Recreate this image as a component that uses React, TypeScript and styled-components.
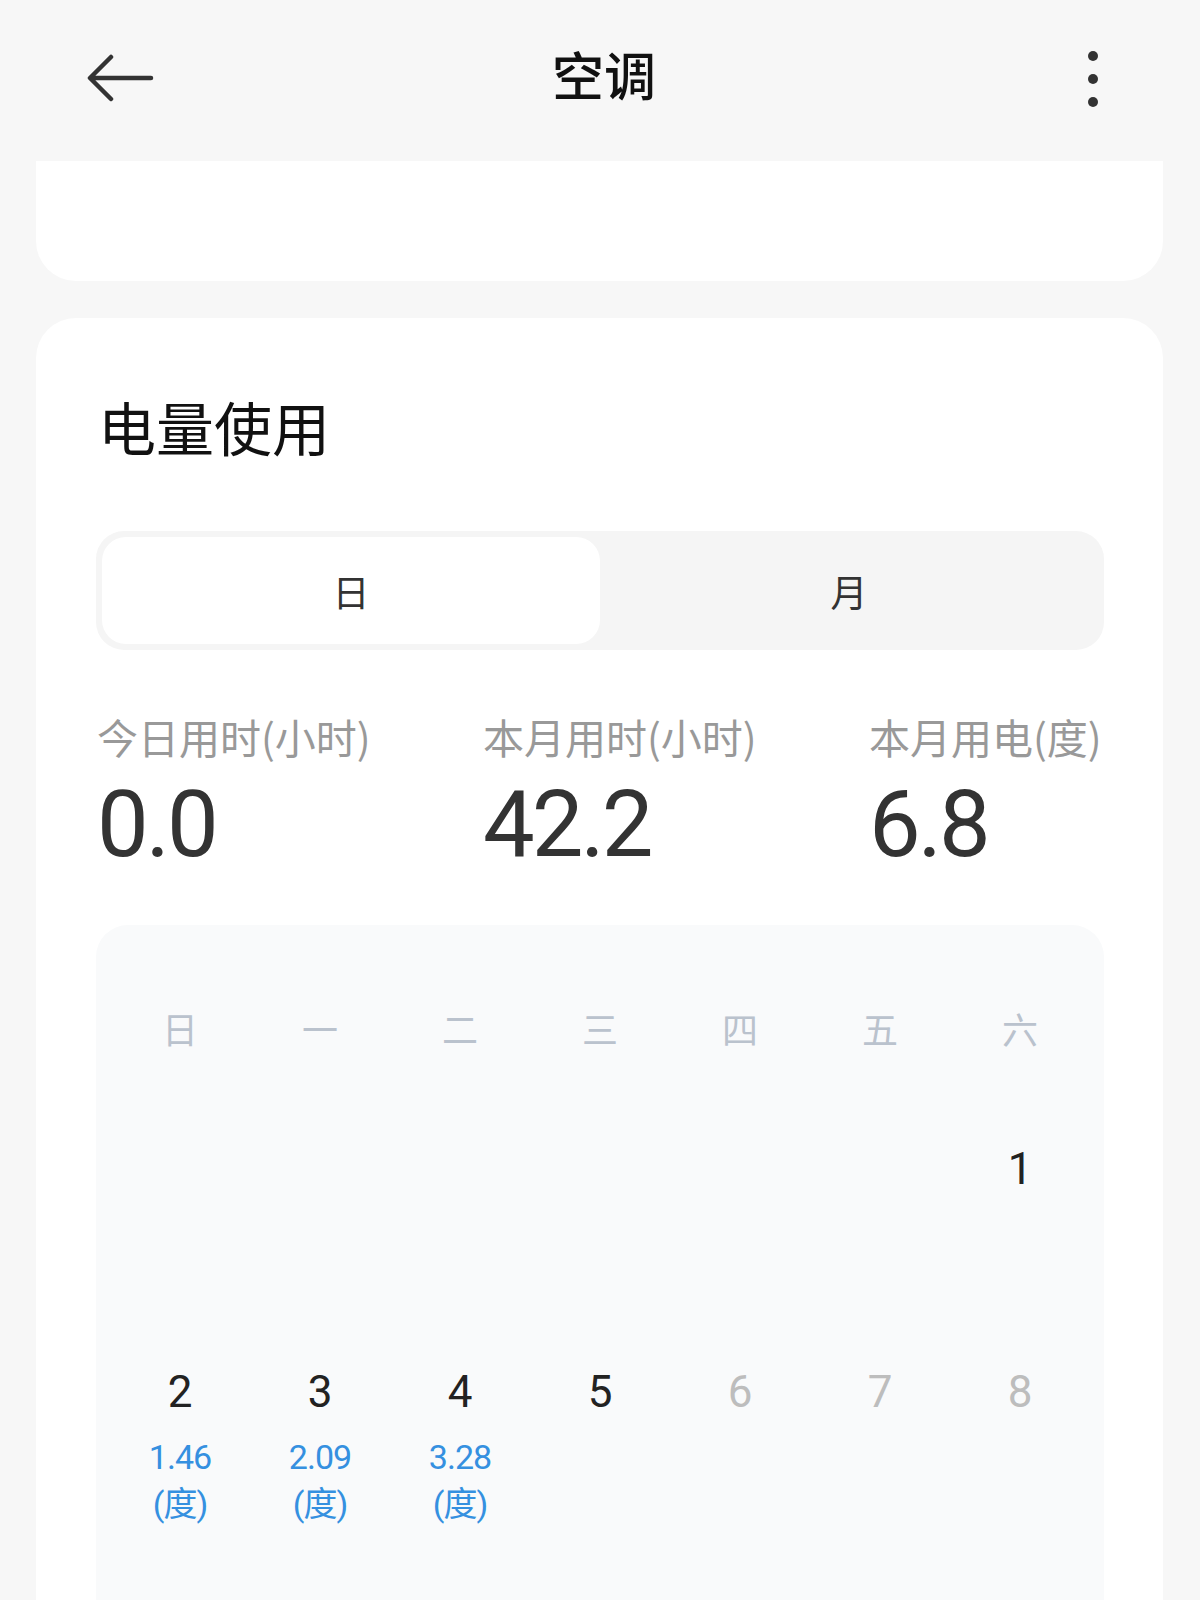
import styled, { createGlobalStyle } from 'styled-components'

const GlobalStyle = createGlobalStyle`
  html, body {
    margin: 0;
    padding: 0;
    background: #f7f7f7;
  }
  body {
    font-family: Roboto, 'Noto Sans CJK SC', sans-serif;
    color: #333;
  }
`

const weekDays = ['日', '一', '二', '三', '四', '五', '六']

type Day = { day?: number; usage?: string; future?: boolean }

const days: Day[] = [
  {}, {}, {}, {}, {}, {},
  { day: 1 },
  { day: 2, usage: '1.46' },
  { day: 3, usage: '2.09' },
  { day: 4, usage: '3.28' },
  { day: 5 },
  { day: 6, future: true },
  { day: 7, future: true },
  { day: 8, future: true },
]

const stats = [
  { label: '今日用时(小时)', value: '0.0' },
  { label: '本月用时(小时)', value: '42.2' },
  { label: '本月用电(度)', value: '6.8' },
]

export default function App() {
  return (
    <>
      <GlobalStyle />
      <Page>
        <Header>
          <IconButton aria-label="back">
            <svg width="68" height="48" viewBox="0 0 68 48" fill="none">
              <path
                d="M65 24H5M25 3L4 24L25 45"
                stroke="#333"
                strokeWidth="4.5"
                strokeLinecap="round"
                strokeLinejoin="round"
              />
            </svg>
          </IconButton>
          <Title>空调</Title>
          <MoreButton aria-label="more">
            <Dot />
            <Dot />
            <Dot />
          </MoreButton>
        </Header>

        <TopCard />

        <Card>
          <CardTitle>电量使用</CardTitle>

          <Segmented>
            <Segment active>日</Segment>
            <Segment>月</Segment>
          </Segmented>

          <StatsRow>
            {stats.map((s) => (
              <Stat key={s.label}>
                <StatLabel>{s.label}</StatLabel>
                <StatValue>{s.value}</StatValue>
              </Stat>
            ))}
          </StatsRow>

          <Calendar>
            <WeekRow>
              {weekDays.map((d) => (
                <WeekDay key={d}>{d}</WeekDay>
              ))}
            </WeekRow>
            <DayGrid>
              {days.map((d, i) => (
                <DayCell key={i}>
                  {d.day !== undefined && <DayNumber future={d.future}>{d.day}</DayNumber>}
                  {d.usage && (
                    <>
                      <Usage>{d.usage}</Usage>
                      <Usage>(度)</Usage>
                    </>
                  )}
                </DayCell>
              ))}
            </DayGrid>
          </Calendar>
        </Card>
      </Page>
    </>
  )
}

const Page = styled.div`
  width: 1200px;
  min-height: 1600px;
  background: #f7f7f7;
  overflow: hidden;
`

const Header = styled.header`
  height: 161px;
  display: flex;
  align-items: center;
  justify-content: space-between;
  padding: 0 97px 6px 86px;
  box-sizing: border-box;
  position: relative;
`

const IconButton = styled.div`
  width: 68px;
  height: 48px;
  display: flex;
  align-items: center;
`

const Title = styled.h1`
  position: absolute;
  left: 8px;
  right: 0;
  top: 42px;
  margin: 0;
  text-align: center;
  font-family: 'Noto Sans CJK SC', sans-serif;
  font-size: 52px;
  font-weight: 500;
  line-height: 64px;
  color: #111;
  pointer-events: none;
`

const MoreButton = styled.div`
  display: flex;
  flex-direction: column;
  align-items: center;
  gap: 13px;
  width: 20px;
  margin-top: 2px;
`

const Dot = styled.span`
  width: 10px;
  height: 10px;
  border-radius: 50%;
  background: #333;
`

const TopCard = styled.div`
  height: 120px;
  margin: 0 37px 0 36px;
  background: #fff;
  border-radius: 0 0 40px 40px;
`

const Card = styled.section`
  margin: 37px 37px 0 36px;
  background: #fff;
  border-radius: 40px 40px 0 0;
  padding: 71px 59px 0 60px;
  min-height: 1300px;
  box-sizing: border-box;
`

const CardTitle = styled.h2`
  margin: 0 0 0 2px;
  font-family: 'Noto Sans CJK SC', sans-serif;
  font-size: 58px;
  font-weight: 400;
  line-height: 74px;
  color: #111;
`

const Segmented = styled.div`
  margin-top: 68px;
  height: 119px;
  padding: 6px;
  box-sizing: border-box;
  background: #f5f5f5;
  border-radius: 28px;
  display: grid;
  grid-template-columns: 1fr 1fr;
`

const Segment = styled.div<{ active?: boolean }>`
  display: flex;
  align-items: center;
  justify-content: center;
  border-radius: 24px;
  background: ${(p) => (p.active ? '#fff' : 'transparent')};
  font-family: 'Noto Sans CJK SC', sans-serif;
  font-size: 37px;
  color: #333;
`

const StatsRow = styled.div`
  margin-top: 62px;
  display: grid;
  grid-template-columns: 386px 386px auto;
`

const Stat = styled.div`
  display: flex;
  flex-direction: column;
  padding-left: 1px;
`

const StatLabel = styled.div`
  font-family: 'Noto Sans CJK SC', sans-serif;
  font-size: 41px;
  line-height: 48px;
  color: #999;
  white-space: nowrap;
`

const StatValue = styled.div`
  margin-top: 12px;
  font-family: Roboto, sans-serif;
  font-size: 92px;
  line-height: 106px;
  color: #333;
  letter-spacing: -3px;
`

const Calendar = styled.div`
  margin-top: 47px;
  background: #f9fafb;
  border-radius: 32px;
  padding: 73px 14px 0;
  min-height: 700px;
`

const WeekRow = styled.div`
  display: grid;
  grid-template-columns: repeat(7, 1fr);
  height: 60px;
  align-items: center;
`

const WeekDay = styled.div`
  text-align: center;
  font-family: 'Noto Sans CJK SC', sans-serif;
  font-size: 36px;
  color: #bac2cd;
`

const DayGrid = styled.div`
  display: grid;
  grid-template-columns: repeat(7, 1fr);
  grid-auto-rows: 223px;
`

const DayCell = styled.div`
  display: flex;
  flex-direction: column;
  align-items: center;
  padding-top: 83px;
`

const DayNumber = styled.div<{ future?: boolean }>`
  font-family: Roboto, sans-serif;
  font-size: 44px;
  line-height: 56px;
  color: ${(p) => (p.future ? '#bdbdbd' : '#222')};
  margin-bottom: 14px;
`

const Usage = styled.div`
  font-family: Roboto, 'Noto Sans CJK SC', sans-serif;
  font-size: 34px;
  line-height: 47px;
  color: #3590e0;
  letter-spacing: -1px;
`
